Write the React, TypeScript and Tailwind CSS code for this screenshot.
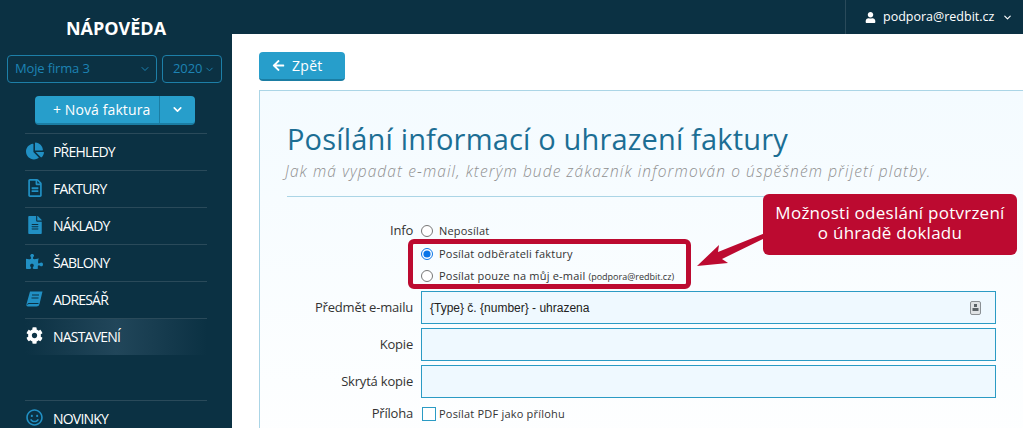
import { ChevronDown } from "lucide-react";
import { FaPuzzlePiece, FaCog, FaChartPie, FaArrowLeft, FaUser, FaRegFileAlt, FaFileAlt, FaRegSmile } from "react-icons/fa";

function NavItem({ icon, label, active }: { icon: React.ReactNode; label: string; active?: boolean }) {
  return (
    <div className="shrink-0 border-t border-[#2a4a5a] mx-[25px] h-[37px] flex items-center relative">
      {active && (
        <div className="absolute inset-0 bg-gradient-to-r from-[#0b3143] via-[#21465a] to-[#0b3143]" />
      )}
      <div className="w-[19px] mr-[9px] flex justify-center relative -mt-[3px]">{icon}</div>
      <span className="text-[14px] text-white tracking-[-0.8px] relative -mt-[2px]">{label}</span>
    </div>
  );
}

function Row({ label, children }: { label: string; children: React.ReactNode }) {
  return (
    <div className="flex items-center">
      <div className="w-[161px] pr-[8px] text-right text-[13px] tracking-[-0.2px] text-[#333]">{label}</div>
      {children}
    </div>
  );
}

function Radio({ checked, children }: { checked?: boolean; children: React.ReactNode }) {
  return (
    <label className="flex items-center h-[22px] text-[11px] tracking-[0.2px] text-[#333]">
      <input type="radio" name="info" defaultChecked={checked} className="w-[12px] h-[12px] ml-[0px] mr-[5px] accent-[#0a75e8]" />
      <span className="ml-[1px] whitespace-pre">{children}</span>
    </label>
  );
}

export default function App() {
  return (
    <div className="w-[1023px] h-[428px] overflow-hidden flex bg-white font-['Open_Sans',sans-serif] relative">
      <aside className="w-[232px] shrink-0 bg-[#0b3143] flex flex-col">
        <div className="shrink-0 h-[55px] pt-[16px] text-center text-[18px] leading-[24px] font-bold text-white">NÁPOVĚDA</div>
        <div className="shrink-0 flex gap-[5px] px-[7px]">
          <div className="w-[150px] h-[28px] border border-[#1d7fa8] rounded-[4px] flex items-center justify-between pl-[7px] pr-[5px] text-[13px] tracking-[-0.15px] text-[#1d83b4]">
            Moje firma 3
            <ChevronDown size={12} />
          </div>
          <div className="w-[60px] h-[28px] border border-[#1d7fa8] rounded-[4px] flex items-center justify-between pl-[10px] pr-[6px] text-[13px] tracking-[-0.1px] text-[#1d83b4]">
            2020
            <ChevronDown size={11} />
          </div>
        </div>
        <div className="shrink-0 mt-[13px] ml-[35px] w-[160px] h-[29px] flex rounded-[4px] bg-[#279ecb] border-b-2 border-[#1b7da3] text-white text-[14px]">
          <div className="w-[125px] pl-[18px] flex items-center border-r border-[#1b7da3] tracking-[0.1px]">+ Nová faktura</div>
          <div className="flex-1 flex items-center justify-center"><ChevronDown size={13} strokeWidth={3} /></div>
        </div>
        <div className="shrink-0 mt-[8px]">
          <NavItem label="PŘEHLEDY" icon={<FaChartPie size={18} className="text-[#2190c4]" />} />
          <NavItem label="FAKTURY" icon={<FaRegFileAlt size={18} className="text-[#2190c4]" />} />
          <NavItem label="NÁKLADY" icon={<FaFileAlt size={18} className="text-[#2190c4]" />} />
          <NavItem label="ŠABLONY" icon={<FaPuzzlePiece size={17} className="text-[#2190c4]" />} />
          <NavItem
            label="ADRESÁŘ"
            icon={
              <svg width="17" height="16" viewBox="0 0 17 16">
                <path d="M4 0.5 H16.5 L13.5 13 Q13 15.5 10.5 15.5 H2 Q0 15.5 0.5 13 Z" fill="#2190c4" />
                <path d="M1.5 13.5 Q1.5 12.5 3 12.5 H12.5" fill="none" stroke="#0b3143" strokeWidth="1" />
                <path d="M6 4 H13 M5.5 7 H12.5" stroke="#0b3143" strokeWidth="1" />
              </svg>
            }
          />
          <NavItem label="NASTAVENÍ" icon={<FaCog size={17} className="text-white" />} active />
        </div>
        <div className="shrink-0 mt-[45px]">
          <NavItem label="NOVINKY" icon={<FaRegSmile size={17} className="text-[#2190c4]" />} />
        </div>
      </aside>

      <main className="flex-1 min-w-0 flex flex-col">
        <header className="shrink-0 h-[34px] bg-[#0b3143] flex justify-end">
          <div className="w-[178px] border-l border-[#2a4a5a] pl-[19px] flex items-center text-white text-[13px]">
            <FaUser size={11} />
            <span className="ml-[7px] text-[12.5px]">podpora@redbit.cz</span>
            <ChevronDown size={11} strokeWidth={2.5} className="ml-[8px]" />
          </div>
        </header>
        <div className="shrink-0 pl-[27px] pt-[18px]">
          <div className="w-[86px] h-[29px] rounded-[4px] bg-[#279ecb] border-b-2 border-[#1b7da3] text-white text-[14px] flex items-center pl-[13px]">
            <FaArrowLeft size={13} />
            <span className="ml-[7px] tracking-[0.3px]">Zpět</span>
          </div>
          <section className="mt-[9px] border border-[#abd5e6] border-r-0 h-[400px] bg-gradient-to-b from-[#f4fbff] to-white pl-[27px]">
            <h1 className="mt-[28px] text-[29px] leading-[40px] text-[#1c6e94] tracking-[0.17px]">Posílání informací o uhrazení faktury</h1>
            <p className="mt-[2px] italic font-light text-[15.5px] leading-[20px] tracking-[1.1px] text-[#8f8f8f] -ml-[2px] whitespace-nowrap">Jak má vypadat e-mail, kterým bude zákazník informován o úspěšném přijetí platby.</p>
            <div className="mt-[15px] mr-[26px] border-t border-[#abd5e6]" />
            <div className="mt-[23px] -ml-[27px]">
              <Row label="Info">
                <Radio>Neposílat</Radio>
              </Row>
              <div className="pl-[161px] pt-[1px]">
                <Radio checked>Posílat odběrateli faktury</Radio>
                <Radio>Posílat pouze na můj e-mail <span className="text-[9px] tracking-normal">(podpora@redbit.cz)</span></Radio>
              </div>
              <div className="mt-[4px] flex flex-col gap-[4px]">
                <Row label="Předmět e-mailu">
                  <div className="w-[575px] h-[33px] border border-[#2b9bc4] bg-[#eff9ff] flex items-center justify-between pl-[8px] pr-[14px] font-['Liberation_Sans',sans-serif] text-[12px] tracking-normal text-[#222]">
                    {"{Type} č. {number} - uhrazena"}
                    <svg width="11" height="14" viewBox="0 0 11 14">
                      <rect x="0.5" y="0.5" width="10" height="13" rx="1.5" fill="#dfe3e5" stroke="#8a9094" />
                      <rect x="4" y="3" width="3" height="3" fill="#5c6468" />
                      <rect x="2.5" y="7" width="6" height="3" fill="#5c6468" />
                    </svg>
                  </div>
                </Row>
                <Row label="Kopie">
                  <div className="w-[575px] h-[33px] border border-[#2b9bc4] bg-[#eff9ff]" />
                </Row>
                <Row label="Skrytá kopie">
                  <div className="w-[575px] h-[33px] border border-[#2b9bc4] bg-[#eff9ff]" />
                </Row>
              </div>
              <div className="mt-[6px]">
                <Row label="Příloha">
                  <div className="w-[14px] h-[14px] ml-[1px] border border-[#2b9bc4] bg-white" />
                  <span className="ml-[3px] text-[11px] tracking-[0.2px] text-[#333]">Posílat PDF jako přílohu</span>
                </Row>
              </div>
            </div>
          </section>
        </div>
      </main>

      <div className="absolute left-[408px] top-[239px] w-[283px] h-[50px] border-[5px] border-[#bc0a30] rounded-[6px]" />
      <div className="absolute left-[763px] top-[194px] w-[254px] h-[61px] bg-[#bc0a30] rounded-[6px] text-white text-[17px] leading-[20px] text-center pt-[9px] tracking-[0.25px]">
        Možnosti odeslání potvrzení<br />o úhradě dokladu
      </div>
      <svg className="absolute left-[690px] top-[225px]" width="80" height="50" viewBox="0 0 80 50">
        <path d="M7 41 L29 20 L28 27 L75 8 L75 13 L32 34 L38 38 Z" fill="#bc0a30" />
      </svg>
    </div>
  );
}
